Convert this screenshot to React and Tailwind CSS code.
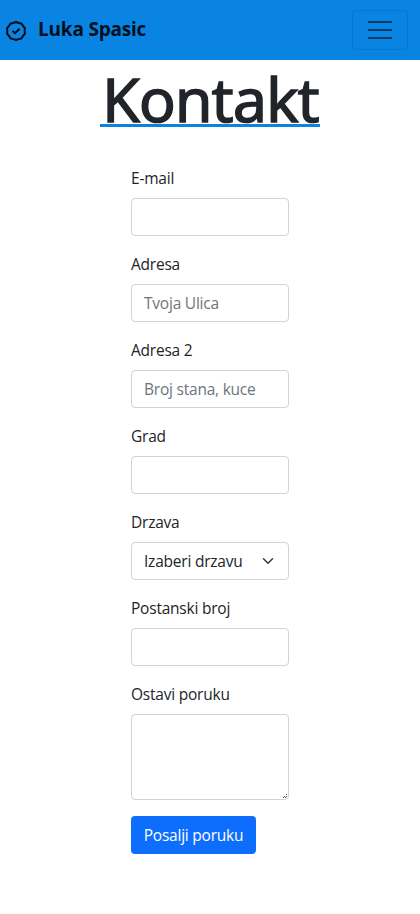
const control =
  "block w-full h-[38px] rounded-[4px] border border-[#ced4da] bg-white px-3 text-[15.5px] tracking-[-0.22px] leading-6 text-[#212529] placeholder:text-[#6c757d] placeholder:opacity-100";

function Field({ label, id, children }) {
  return (
    <div className="mb-4">
      <label htmlFor={id} className="mb-2 block h-6 whitespace-nowrap leading-6">
        {label}
      </label>
      {children}
    </div>
  );
}

function BadgeIcon() {
  return (
    <svg
      viewBox="0 0 24 24"
      className="mt-[2px] size-6"
      fill="none"
      stroke="currentColor"
      strokeWidth="2"
      strokeLinejoin="round"
    >
      <path d="M12 3Q14.6 4.1 17.4 4.6Q18.8 7 20.9 9.2Q20.6 12 20.9 14.8Q18.8 17 17.4 19.4Q14.6 19.9 12 21Q9.4 19.9 6.6 19.4Q5.2 17 3.1 14.8Q3.4 12 3.1 9.2Q5.2 7 6.6 4.6Q9.4 4.1 12 3Z" />
      <path d="M8.6 12l2.4 2.3 4.5-4.6" />
    </svg>
  );
}

export default function App() {
  return (
    <div className="min-h-[914px] bg-white font-['Open_Sans','Noto_Sans',sans-serif] text-[15.5px] leading-6 tracking-[-0.22px] text-[#212529]">
      <nav className="flex h-[60px] items-center justify-between bg-[#0984e3] pl-1 pr-3">
        <a className="flex items-center text-black/90">
          <BadgeIcon />
          <span className="-mt-[2px] ml-[10px] whitespace-nowrap text-[19px] font-bold leading-[30px] tracking-[-0.2px]">
            Luka Spasic
          </span>
        </a>
        <button
          aria-label="Menu"
          className="flex h-10 w-14 items-center justify-center rounded-[4px] border border-black/10"
        >
          <svg viewBox="0 0 30 30" className="size-[30px]" fill="none">
            <path
              stroke="rgba(0,0,0,0.55)"
              strokeMiterlimit="10"
              strokeWidth="2"
              d="M3 7h24M3 15h24M3 23h24"
            />
          </svg>
        </button>
      </nav>
      <main className="flex flex-col items-center">
        <h1 className="flex h-[67px] w-[220px] justify-center border-b-[3px] border-[#0984e3] whitespace-nowrap text-[61px] font-normal leading-[78px] tracking-[-0.6px] [-webkit-text-stroke:1.7px_#212529]">
          <span className="ml-px">Kontakt</span>
        </h1>
        <form className="mt-[39px] w-[158px]">
          <Field label="E-mail" id="email">
            <input id="email" className={control} />
          </Field>
          <Field label="Adresa" id="adresa">
            <input id="adresa" placeholder="Tvoja Ulica" className={control} />
          </Field>
          <Field label="Adresa 2" id="adresa2">
            <input id="adresa2" placeholder="Broj stana, kuce" className={control} />
          </Field>
          <Field label="Grad" id="grad">
            <input id="grad" className={control} />
          </Field>
          <Field label="Drzava" id="drzava">
            <div className={control + " flex! items-center justify-between"}>
              <span className="whitespace-nowrap">Izaberi drzavu</span>
              <svg viewBox="0 0 16 16" className="mr-[2px] size-3 shrink-0" fill="none">
                <path
                  stroke="#343a40"
                  strokeLinecap="round"
                  strokeLinejoin="round"
                  strokeWidth="2"
                  d="M2 5l6 6 6-6"
                />
              </svg>
            </div>
          </Field>
          <Field label="Postanski broj" id="postanski">
            <input id="postanski" className={control} />
          </Field>
          <Field label="Ostavi poruku" id="poruka">
            <div className="relative">
              <textarea id="poruka" className={control + " h-[86px]! resize-none"} />
              <svg
                viewBox="0 0 5 5"
                className="absolute bottom-[1px] right-[1px] size-[5px]"
                shapeRendering="crispEdges"
                fill="#555"
              >
                <path d="M3 0h1v1h-1zM1 2h1v1h-1zM3 2h1v1h-1zM0 3h1v1h-1zM2 3h1v1h-1z" />
              </svg>
            </div>
          </Field>
          <button className="flex h-[38px] w-[125px] items-center justify-center whitespace-nowrap rounded-[4px] bg-[#0d6efd] text-white">
            Posalji poruku
          </button>
        </form>
      </main>
    </div>
  );
}
